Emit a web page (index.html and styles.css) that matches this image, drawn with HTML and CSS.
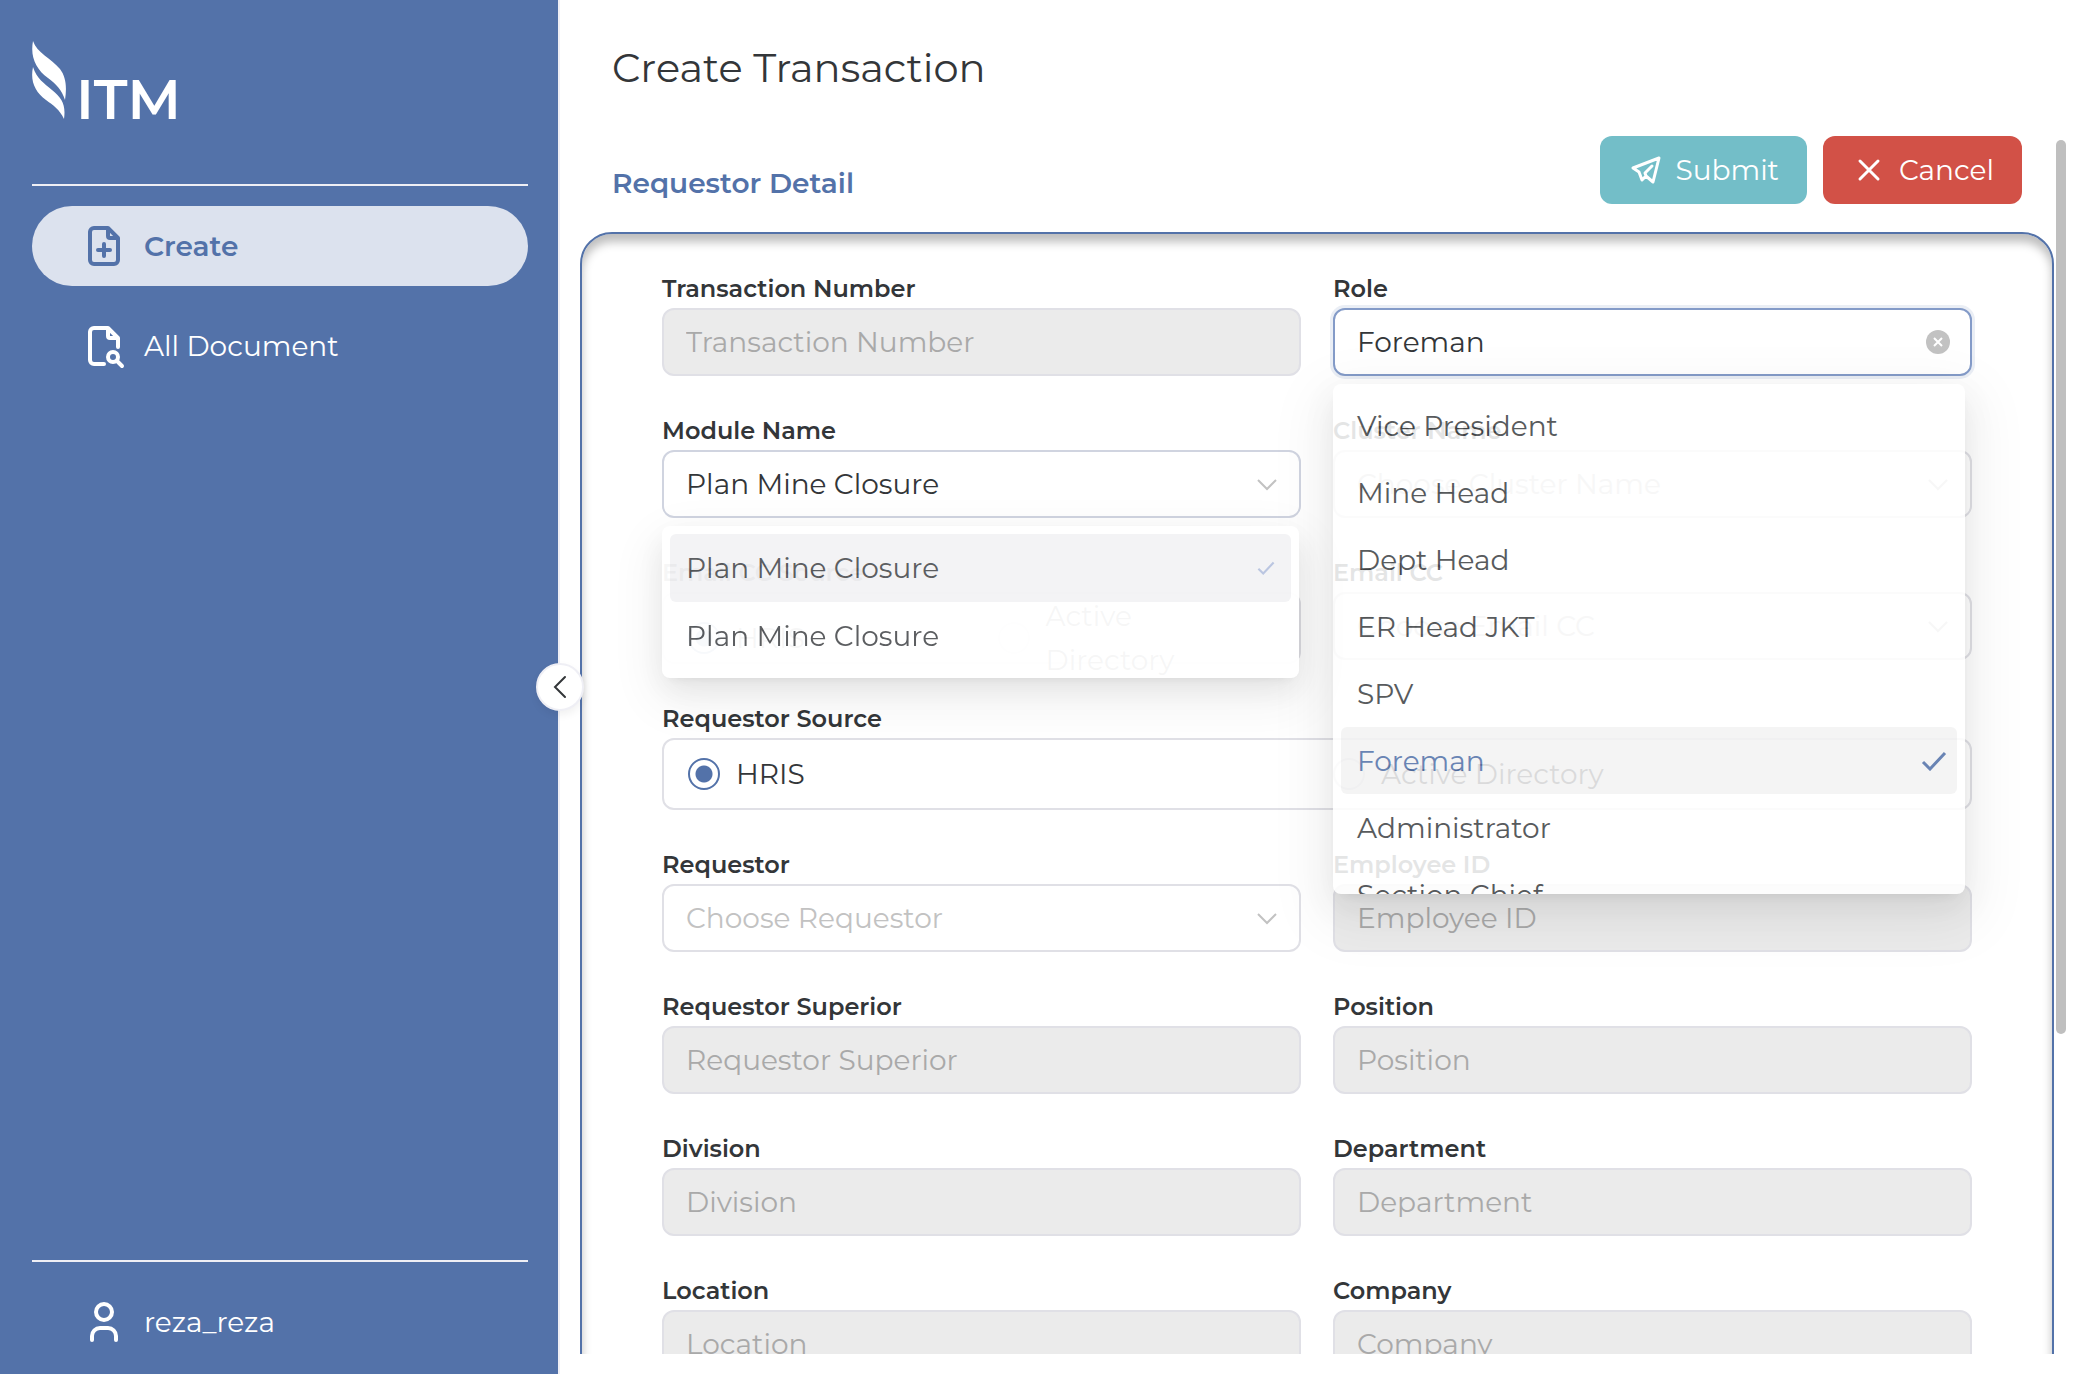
FILE: index.html
```html
<!DOCTYPE html>
<html lang="en">
<head>
<meta charset="utf-8">
<title>Create Transaction</title>
<link rel="stylesheet" href="styles.css">
</head>
<body>
<svg class="sprite" aria-hidden="true">
  <symbol id="chevron" viewBox="0 0 22 14"><path d="M2 2l9 9 9-9" fill="none" stroke="currentColor" stroke-width="2"/></symbol>
  <symbol id="check" viewBox="0 0 26 20"><path d="M2 11l7 7L24 2" fill="none" stroke="currentColor" stroke-width="3"/></symbol>
</svg>
<div class="app">
  <aside class="sidebar">
    <div class="logo">
      <svg class="logo-mark" viewBox="0 0 34 79" aria-hidden="true">
        <path d="M1 0C5 12 19 17 28 28C34 36 35 46 33 59C30 49 24 43 16 37C4 28-2 16 1 0Z"/>
        <path d="M1 26C5 38 12 42 20 49C30 57 34 64 32 78C28 69 21 64 14 59C3 51-2 40 1 26Z"/>
      </svg>
      <span class="logo-text">ITM</span>
    </div>
    <nav class="menu">
      <a class="item active" href="#">
        <svg class="item-icon" viewBox="0 0 32 40"><path d="M20 2H6a4 4 0 0 0-4 4v28a4 4 0 0 0 4 4h20a4 4 0 0 0 4-4V12zM20 2v8a2 2 0 0 0 2 2h8M16 18v12M10 24h12"/></svg>
        <span>Create</span>
      </a>
      <a class="item" href="#">
        <svg class="item-icon" viewBox="0 0 32 40"><path d="M16 38H6a4 4 0 0 1-4-4V6a4 4 0 0 1 4-4h14l10 10v9M20 2v8a2 2 0 0 0 2 2h8M29 35l5 5"/><circle cx="25" cy="31" r="5"/></svg>
        <span>All Document</span>
      </a>
    </nav>
    <div class="account">
      <a class="item" href="#">
        <svg class="item-icon" viewBox="-2 0 32 40"><circle cx="14" cy="10" r="8"/><path d="M2 38v-4a8 8 0 0 1 8-8h8a8 8 0 0 1 8 8v4"/></svg>
        <span>reza_reza</span>
      </a>
    </div>
    <button class="collapse" type="button" aria-label="Collapse menu">
      <svg viewBox="0 0 14 24"><path d="M12 2L2 12l10 10"/></svg>
    </button>
  </aside>

  <main class="main">
    <h1 class="title">Create Transaction</h1>
    <div class="content">
      <div class="section-head">
        <h2 class="section-title">Requestor Detail</h2>
        <div class="actions">
          <button class="btn submit" type="button">
            <svg viewBox="0 0 32 32"><path d="M29 4L3 14l6 4 3 8 4-4 7 6zM22 12l-7 7 1 3"/></svg>
            <span>Submit</span>
          </button>
          <button class="btn cancel" type="button">
            <svg viewBox="0 0 32 32"><path d="M7 7l18 18M25 7L7 25"/></svg>
            <span>Cancel</span>
          </button>
        </div>
      </div>

      <form class="panel">
        <div class="field">
          <label for="trx">Transaction Number</label>
          <input class="box" id="trx" type="text" placeholder="Transaction Number" disabled>
        </div>
        <div class="field">
          <label for="role">Role</label>
          <div class="control">
            <input class="box focused" id="role" type="text" value="Foreman">
            <button class="clear" type="button" aria-label="Clear role"><svg viewBox="0 0 24 24"><circle cx="12" cy="12" r="12"/><path d="M8 8l8 8M16 8l-8 8"/></svg></button>
            <ul class="dropdown roles" role="listbox" aria-label="Role">
              <li role="option">Vice President</li>
              <li role="option">Mine Head</li>
              <li role="option">Dept Head</li>
              <li role="option">ER Head JKT</li>
              <li role="option">SPV</li>
              <li role="option" class="selected" aria-selected="true">Foreman<svg class="tick"><use href="#check"/></svg></li>
              <li role="option">Administrator</li>
              <li role="option">Section Chief</li>
            </ul>
          </div>
        </div>

        <div class="field">
          <label for="module">Module Name</label>
          <div class="control">
            <select class="box open" id="module"><option>Plan Mine Closure</option></select>
            <svg class="arrow"><use href="#chevron"/></svg>
            <ul class="dropdown modules" role="listbox" aria-label="Module Name">
              <li role="option" class="selected" aria-selected="true">Plan Mine Closure<svg class="tick"><use href="#check"/></svg></li>
              <li role="option">Plan Mine Closure</li>
            </ul>
          </div>
        </div>
        <div class="field">
          <label for="cluster">Cluster Name</label>
          <div class="control">
            <select class="box empty" id="cluster"><option>Choose Cluster Name</option></select>
            <svg class="arrow"><use href="#chevron"/></svg>
          </div>
        </div>

        <div class="field" role="radiogroup" aria-labelledby="cc-source">
          <span class="label" id="cc-source">Email CC Source</span>
          <div class="box radios">
            <label class="radio"><input type="radio" name="cc" checked><span>HRIS</span></label>
            <label class="radio"><input type="radio" name="cc"><span>Active<br>Directory</span></label>
          </div>
        </div>
        <div class="field">
          <label for="cc">Email CC</label>
          <div class="control">
            <select class="box empty" id="cc"><option>Choose Email CC</option></select>
            <svg class="arrow"><use href="#chevron"/></svg>
          </div>
        </div>

        <div class="field wide" role="radiogroup" aria-labelledby="req-source">
          <span class="label" id="req-source">Requestor Source</span>
          <div class="box radios">
            <label class="radio"><input type="radio" name="source" checked><span>HRIS</span></label>
            <label class="radio"><input type="radio" name="source"><span>Active Directory</span></label>
          </div>
        </div>

        <div class="field">
          <label for="requestor">Requestor</label>
          <div class="control">
            <select class="box empty" id="requestor"><option>Choose Requestor</option></select>
            <svg class="arrow"><use href="#chevron"/></svg>
          </div>
        </div>
        <div class="field">
          <label for="employee">Employee ID</label>
          <input class="box" id="employee" type="text" placeholder="Employee ID" disabled>
        </div>
        <div class="field">
          <label for="superior">Requestor Superior</label>
          <input class="box" id="superior" type="text" placeholder="Requestor Superior" disabled>
        </div>
        <div class="field">
          <label for="position">Position</label>
          <input class="box" id="position" type="text" placeholder="Position" disabled>
        </div>
        <div class="field">
          <label for="division">Division</label>
          <input class="box" id="division" type="text" placeholder="Division" disabled>
        </div>
        <div class="field">
          <label for="department">Department</label>
          <input class="box" id="department" type="text" placeholder="Department" disabled>
        </div>
        <div class="field">
          <label for="location">Location</label>
          <input class="box" id="location" type="text" placeholder="Location" disabled>
        </div>
        <div class="field">
          <label for="company">Company</label>
          <input class="box" id="company" type="text" placeholder="Company" disabled>
        </div>
      </form>
      <div class="scroll-thumb"></div>
    </div>
  </main>
</div>
</body>
</html>
```
FILE: styles.css
```css
* { box-sizing: border-box; }

body {
  margin: 0;
  font-family: Montserrat, Inter, "Liberation Sans", sans-serif;
  font-size: 28px;
  font-weight: 400;
  line-height: 44px;
  color: #333639;
  background: #fff;
}

button, input, select { font: inherit; color: inherit; }
ul { list-style: none; margin: 0; padding: 0; }
.sprite { position: absolute; width: 0; height: 0; }

.app { display: flex; height: 100vh; }

/* Sidebar */
.sidebar {
  position: relative;
  z-index: 1;
  flex: 0 0 560px;
  display: flex;
  flex-direction: column;
  padding: 0 30px 0 32px;
  border-right: 2px solid #efeff5;
  background: #5372a9;
  color: #fff;
}
.logo {
  display: flex;
  align-items: flex-end;
  gap: 10px;
  height: 186px;
  padding-bottom: 64px;
  border-bottom: 2px solid #efeff5;
}
.logo-mark { width: 34px; height: 79px; fill: #fff; }
.logo-text { font-size: 56px; font-weight: 600; line-height: 56px; margin-bottom: -7px; }
.menu {
  display: flex;
  flex-direction: column;
  gap: 20px;
  padding-top: 20px;
}
.item {
  display: flex;
  align-items: center;
  gap: 24px;
  height: 80px;
  padding: 0 56px;
  border-radius: 40px;
  color: inherit;
  text-decoration: none;
}
.item.active { background: #dce2ee; color: #5372a9; font-weight: 600; }
.item-icon {
  width: 32px;
  height: 40px;
  overflow: visible;
  fill: none;
  stroke: currentColor;
  stroke-width: 4;
  stroke-linecap: round;
  stroke-linejoin: round;
}
.account {
  margin-top: auto;
  padding: 20px 0 12px;
  border-top: 2px solid #efeff5;
}
.collapse {
  position: absolute;
  top: 50%;
  right: -26px;
  display: grid;
  place-items: center;
  width: 48px;
  height: 48px;
  padding: 0;
  border: 2px solid #efeff5;
  border-radius: 50%;
  background: #fff;
  box-shadow: 0 4px 8px rgba(0, 0, 0, .06);
  color: #333639;
  transform: translateY(-50%);
}
.collapse svg { width: 14px; height: 24px; fill: none; stroke: currentColor; stroke-width: 2; stroke-linecap: round; }

/* Main area */
.main {
  flex: 1;
  min-width: 0;
  display: flex;
  flex-direction: column;
  padding-bottom: 20px;
}
.title {
  flex: none;
  height: 136px;
  margin: 0;
  padding: 44px 52px;
  font-size: 40px;
  font-weight: 400;
  line-height: 48px;
}
.content {
  position: relative;
  flex: 1;
  min-height: 0;
  padding: 0 20px;
  overflow: hidden;
}
.section-head {
  display: flex;
  justify-content: space-between;
  align-items: flex-end;
  padding: 0 32px 28px;
}
.section-title {
  margin: 0;
  font-size: 28px;
  font-weight: 600;
  line-height: 42px;
  color: #5372a9;
}
.actions { display: flex; gap: 16px; }
.btn {
  display: flex;
  align-items: center;
  gap: 14px;
  height: 68px;
  padding: 0 28px 0 30px;
  border: 0;
  border-radius: 12px;
  color: #fff;
  font-weight: 400;
}
.btn svg {
  width: 32px;
  height: 32px;
  fill: none;
  stroke: currentColor;
  stroke-width: 3;
  stroke-linecap: round;
  stroke-linejoin: round;
}
.submit { background: #73bec8; }
.cancel { background: #d25147; }

.panel {
  display: grid;
  grid-template-columns: minmax(0, 1fr) minmax(0, 1fr);
  gap: 38px 32px;
  padding: 38px 80px;
  border: 2px solid #5372a9;
  border-radius: 32px;
  box-shadow: inset 0 8px 10px rgba(0, 0, 0, .26);
}
.field { display: flex; flex-direction: column; min-width: 0; }
.field > label, .label { font-size: 24px; font-weight: 600; line-height: 34px; margin-bottom: 2px; }
.wide { grid-column: 1 / -1; }
.control { position: relative; }
.box {
  display: block;
  width: 100%;
  height: 68px;
  padding: 0 22px;
  border: 2px solid #e0e0e6;
  border-radius: 12px;
  outline: 0;
  background: #fff;
  appearance: none;
}
.box:disabled { background: #ebebeb; }
.box::placeholder { color: #a9a9a9; opacity: 1; }
.box.empty { color: #c2c2c2; }
.box.open { border-color: #d0d4e0; }
.box.focused { border-color: #849bc8; box-shadow: 0 0 0 3px rgba(83, 114, 169, .12); }
.box.radios {
  display: grid;
  grid-template-columns: minmax(0, 1fr) minmax(0, 1fr);
  gap: 32px;
  align-items: center;
  height: 72px;
  padding: 0 24px;
}
.radio { display: flex; align-items: center; gap: 16px; }
.radio input {
  flex: none;
  width: 32px;
  height: 32px;
  margin: 0;
  border: 2px solid #e0e0e6;
  border-radius: 50%;
  appearance: none;
}
.radio input:checked {
  border-color: #5372a9;
  background: radial-gradient(circle, #5372a9 8px, #fff 9px);
}
.arrow {
  position: absolute;
  top: 28px;
  right: 23px;
  width: 22px;
  height: 14px;
  color: #c2c2c2;
  pointer-events: none;
}
.clear {
  position: absolute;
  top: 22px;
  right: 22px;
  width: 24px;
  height: 24px;
  padding: 0;
  border: 0;
  background: none;
}
.clear svg { display: block; width: 24px; height: 24px; fill: #c2c2c2; stroke-width: 2; }
.clear path { stroke: #fff; }

/* Open option lists */
.dropdown {
  position: absolute;
  z-index: 2;
  top: 76px;
  left: 0;
  padding: 8px;
  border-radius: 8px;
  background: #fff;
  box-shadow:
    0 6px 12px -8px rgba(0, 0, 0, .12),
    0 12px 32px rgba(0, 0, 0, .08),
    0 18px 56px 16px rgba(0, 0, 0, .05);
  overflow: hidden;
}
.dropdown li {
  display: flex;
  align-items: center;
  justify-content: space-between;
  height: 68px;
  padding: 0 16px;
  border-radius: 6px;
}
.dropdown .selected { background: #f3f3f5; }
.modules { right: 2px; opacity: .96; color: #55575a; }
.modules .tick { width: 18px; height: 14px; color: #b8c4e0; }
.roles { right: 7px; height: 510px; opacity: .87; color: #404346; }
.roles li { height: 67px; }
.roles .selected { background: #f3f3f3; color: #5372a9; padding-right: 10px; }
.roles .tick { width: 26px; height: 20px; }

.scroll-thumb {
  position: absolute;
  top: 4px;
  right: 8px;
  width: 10px;
  height: 73.4%;
  border-radius: 5px;
  background: #bfbfbf;
}
```
